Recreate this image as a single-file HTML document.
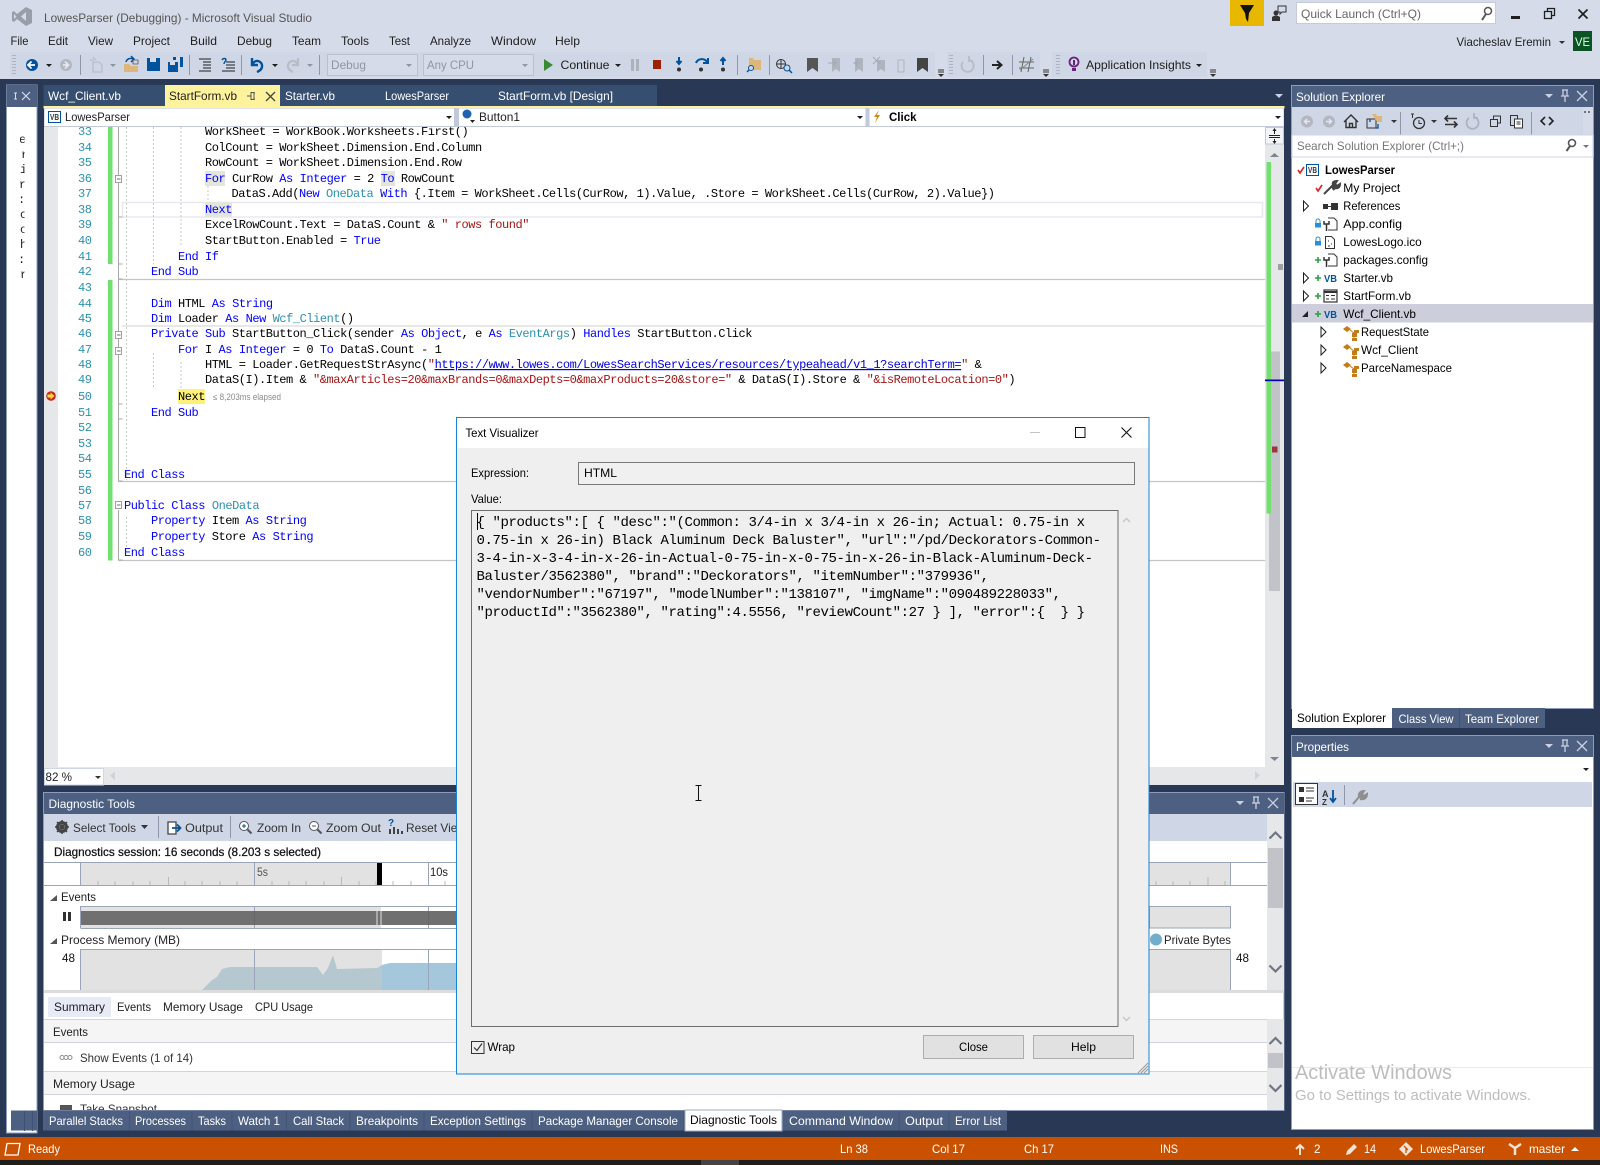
<!DOCTYPE html>
<html lang="en"><head><meta charset="utf-8"><title>LowesParser (Debugging) - Microsoft Visual Studio</title>
<style>
html,body{margin:0;padding:0;background:#293955;width:1600px;height:1165px;overflow:hidden}
svg{display:block}
text{font-family:"Liberation Sans",sans-serif;font-size:12px;fill:#1e1e1e;white-space:pre}
.w text,text.w{fill:#fff}
.c text{font-family:"Liberation Mono",monospace;font-size:12px;letter-spacing:-.45px;fill:#000}
.n text{font-family:"Liberation Mono",monospace;font-size:12px;letter-spacing:-.45px;fill:#2b91af}
.k{fill:#0000ff!important}.t{fill:#2b91af!important}.r{fill:#a31515!important}.u{fill:#0000e0!important;text-decoration:underline}
.d text{font-family:"Liberation Mono",monospace;font-size:14px;letter-spacing:-.4px;fill:#000}
.g{fill:none;stroke:#c8c8c8;stroke-width:1;stroke-dasharray:2 2}
</style></head><body>
<svg xmlns="http://www.w3.org/2000/svg" width="1600" height="1165" viewBox="0 0 1600 1165">
<defs>
<clipPath id="cl"><rect x="20" y="130" width="4.5" height="160"/></clipPath>
<clipPath id="tk"><rect x="44" y="1096" width="300" height="14"/></clipPath>
<g id="hd"><path d="M-4-2h8l-4 4z" fill="#c9d1e3"/><path d="M13-6h6M14-6v6h4v-6M12 0h8M16 0v6M28-5l10 10M38-5l-10 10" fill="none" stroke="#c9d1e3" stroke-width="1.3"/></g>
<path id="exp" d="M0-5l5 5-5 5z" fill="#fff" stroke="#1e1e1e"/>
<g id="cls" fill="#c27d1a"><path d="M0-7l4 3-4 3-4-3zM5 0h5v4h-5zM7-3h5v3h-5zM5 5h5v3h-5z"/><path d="M3-3l4 3v5" fill="none" stroke="#c27d1a"/></g>
<path id="up" d="M-6 3l6-6 6 6" fill="none" stroke="#707584" stroke-width="2.2"/>
<path id="dn" d="M-6-3l6 6 6-6" fill="none" stroke="#707584" stroke-width="2.2"/>
<path id="plus" d="M-3 0h6M0-3v6" stroke="#2ea043" stroke-width="1.6"/>
<g id="lock"><path d="M-2-1v-2a2 2 0 0 1 4 0v2" fill="none" stroke="#2a8fd8"/><rect x="-3" y="-1" width="6" height="4.5" fill="#2a8fd8"/></g>
<path id="chk" d="M-3 0l2 3 4-6" fill="none" stroke="#e01f1f" stroke-width="1.6"/>
</defs>

<!-- top chrome -->
<rect width="1600" height="1165" fill="#d6dbe9"/>
<rect x="10" y="52" width="925" height="25" fill="#cfd6e5"/>
<rect x="947" y="52" width="93" height="25" fill="#cfd6e5"/>
<rect x="1052" y="52" width="155" height="25" fill="#cfd6e5"/>
<path d="M26 7l6 3v13l-6 3-9-7-3 3-2-1v-9l2-1 3 3zM26 12l-5 4.500 5 4.500zM14 14v5l2.500-2.500z" fill="#9a9ea9" fill-rule="evenodd"/>
<text x="44" y="22" textLength="268" lengthAdjust="spacingAndGlyphs" style="fill:#555">LowesParser (Debugging) - Microsoft Visual Studio</text>
<text x="10.500" y="45" textLength="18" lengthAdjust="spacingAndGlyphs">File</text>
<text x="48" y="45" textLength="20" lengthAdjust="spacingAndGlyphs">Edit</text>
<text x="88" y="45" textLength="25" lengthAdjust="spacingAndGlyphs">View</text>
<text x="133" y="45" textLength="37" lengthAdjust="spacingAndGlyphs">Project</text>
<text x="190" y="45" textLength="27" lengthAdjust="spacingAndGlyphs">Build</text>
<text x="237" y="45" textLength="35" lengthAdjust="spacingAndGlyphs">Debug</text>
<text x="292" y="45" textLength="29" lengthAdjust="spacingAndGlyphs">Team</text>
<text x="341" y="45" textLength="28" lengthAdjust="spacingAndGlyphs">Tools</text>
<text x="389" y="45" textLength="21" lengthAdjust="spacingAndGlyphs">Test</text>
<text x="430" y="45" textLength="41" lengthAdjust="spacingAndGlyphs">Analyze</text>
<text x="491" y="45" textLength="45" lengthAdjust="spacingAndGlyphs">Window</text>
<text x="555" y="45" textLength="25" lengthAdjust="spacingAndGlyphs">Help</text>

<!-- toolbar -->
<path d="M13 55v20M15 55v20" stroke="#8a90a0" stroke-dasharray="1 2"/>
<circle cx="32" cy="65" r="6" fill="#00539c"/><path d="M35 65h-6M31.500 61.500l-3.500 3.500 3.500 3.500" fill="none" stroke="#fff" stroke-width="1.800"/>
<path d="M46 64h6l-3 3z" fill="#1e1e1e"/>
<circle cx="66" cy="65" r="6" fill="#b3b7c2"/><path d="M63 65h6M65 61.500l3.500 3.500-3.500 3.500" fill="none" stroke="#e4e7ef" stroke-width="1.800"/>
<path d="M80.500 55v20M189.500 55v20M241.500 55v20M319.500 55v20M737.500 55v20M769.500 55v20M983.500 55v20M1012.500 55v20" stroke="#8f97a8"/>
<path d="M93 62h6l3 3v7h-9zM93 57l3 3M90 60h4" fill="none" stroke="#b8bcc7" stroke-width="1.200"/>
<path d="M110 64h6l-3 3z" fill="#8f94a0"/>
<path d="M124 64h5l2 2h7v6h-14z" fill="#dcb67a"/><path d="M126 62c1-4 5-4 7-3M131 56l3 3-3 3" fill="none" stroke="#00539c" stroke-width="1.500"/><path d="M133 60h5v4h-5z" fill="none" stroke="#555" stroke-width=".8"/>
<path d="M147 58h13v13h-13z" fill="#00539c"/><rect x="150" y="58" width="6" height="4" fill="#d6dbe9"/>
<path d="M168 62h10v10h-10z" fill="#00539c"/><path d="M173 57h10v10h-3v-7h-7z" fill="#00539c"/><rect x="176" y="57" width="4" height="3" fill="#d6dbe9"/><rect x="170" y="62" width="5" height="3" fill="#d6dbe9"/>
<path d="M199 59h12M203 62h8M203 65h8M203 68h8M199 71h12" stroke="#1e1e1e"/><path d="M226 62h9M226 65h9M226 68h9M222 71h13" stroke="#1e1e1e"/><path d="M222 60c1-2 4-2 4 0 0 1-2 2-2 4" fill="none" stroke="#00539c" stroke-width="1.400"/>
<path d="M252 58v7h6M252 65c3-7 11-4 10 2-.5 3-3 4-5 5" fill="none" stroke="#00539c" stroke-width="2.400"/>
<path d="M272 64h6l-3 3z" fill="#1e1e1e"/>
<path d="M298 58v7h-6M298 65c-3-7-11-4-10 2 .5 3 3 4 5 5" fill="none" stroke="#b8bcc7" stroke-width="2.200"/>
<path d="M307 64h6l-3 3z" fill="#8f94a0"/>
<rect x="327.500" y="54.500" width="90" height="21" fill="#d6dbe9" stroke="#b9c0d0"/>
<rect x="423.500" y="54.500" width="110" height="21" fill="#d6dbe9" stroke="#b9c0d0"/>
<text x="331" y="69" textLength="35" lengthAdjust="spacingAndGlyphs" style="fill:#9095a3">Debug</text>
<text x="427" y="69" textLength="47" lengthAdjust="spacingAndGlyphs" style="fill:#9095a3">Any CPU</text>
<path d="M406 64h6l-3 3zM522 64h6l-3 3z" fill="#9095a3"/>
<path d="M544 59l9 6-9 6z" fill="#388a34"/>
<text x="560.500" y="69" textLength="49" lengthAdjust="spacingAndGlyphs">Continue</text>
<path d="M615 64h6l-3 3z" fill="#1e1e1e"/>
<path d="M631 59h3v12h-3zM636 59h3v12h-3z" fill="#aeb2bd"/>
<rect x="653" y="60" width="8" height="9" fill="#9d2000"/>
<path d="M679 57v6M676.500 61l2.500 3 2.500-3" fill="none" stroke="#00539c" stroke-width="2"/><circle cx="679" cy="69.500" r="2" fill="#333"/>
<path d="M696 63c2-5 9-5 11-1M708 58v5h-5" fill="none" stroke="#00539c" stroke-width="2"/><circle cx="701" cy="69.500" r="2" fill="#333"/>
<path d="M723 65v-6M720.500 61l2.500-3 2.500 3" fill="none" stroke="#00539c" stroke-width="2"/><circle cx="723" cy="69.500" r="2" fill="#333"/>
<path d="M749 58h4l1 2h7v10h-12z" fill="#dcb67a"/><circle cx="751" cy="68" r="2.500" fill="#cfd6e5" stroke="#00539c"/><path d="M749 70l-2 2" stroke="#00539c" stroke-width="1.500"/>
<circle cx="781" cy="64" r="4.500" fill="none" stroke="#333"/><path d="M776.500 64h9M781 59.500v9" stroke="#333"/><circle cx="787" cy="68" r="3" fill="#cfd6e5" stroke="#00539c"/><path d="M789 70l3 3" stroke="#00539c" stroke-width="1.500"/>
<path d="M807 58h11v14l-5.500-4-5.500 4z" fill="#555"/>
<path d="M832 58h8v14l-4-3-4 3z" fill="#b0b4bf"/><path d="M828 63h7M833 60l3 3-3 3" fill="none" stroke="#a5a9b5"/>
<path d="M855 58h8v14l-4-3-4 3z" fill="#b0b4bf"/><path d="M853 63h7M858 60l-3 3 3 3" fill="none" stroke="#a5a9b5"/>
<path d="M877 60h8v12l-4-3-4 3z" fill="#b0b4bf"/><path d="M873 57l7 7M880 57l-7 7" stroke="#a5a9b5"/>
<rect x="898" y="60" width="6" height="12" fill="none" stroke="#b0b4bf"/>
<path d="M917 58h11v14l-5.500-4-5.500 4z" fill="#444"/>
<path d="M938 70h6M938 72h6" stroke="#333"/><path d="M938 74h6l-3 3z" fill="#333"/>
<path d="M950 55v20M952 55v20" stroke="#8a90a0" stroke-dasharray="1 2"/>
<path d="M963 62a6 6 0 1 0 6-2M969 56v5h4" fill="none" stroke="#b8bcc7" stroke-width="1.800"/>
<path d="M992 65h9M997 61l4.500 4-4.500 4" fill="none" stroke="#222" stroke-width="2"/>
<path d="M1024 57l-3 15M1031 57l-3 15M1019 62h15M1019 68h15" stroke="#666"/><path d="M1020 70l13-11" stroke="#888"/>
<path d="M1043 70h6M1043 72h6" stroke="#333"/><path d="M1043 74h6l-3 3z" fill="#333"/>
<path d="M1057 55v20M1059 55v20" stroke="#8a90a0" stroke-dasharray="1 2"/>
<circle cx="1074" cy="62" r="4.500" fill="none" stroke="#68217a" stroke-width="1.800"/><path d="M1072 68h4v3h-4z" fill="#68217a"/><rect x="1073" y="60" width="2" height="5" fill="#68217a"/>
<text x="1086" y="69" textLength="105" lengthAdjust="spacingAndGlyphs">Application Insights</text>
<path d="M1196 64h6l-3 3z" fill="#1e1e1e"/>
<path d="M1210 70h6M1210 72h6" stroke="#333"/><path d="M1210 74h6l-3 3z" fill="#333"/>

<!-- top right -->
<rect x="1230" width="34" height="26" fill="#e8b800"/><path d="M1240 5h14l-5 8-1 9-2-3-1-6z" fill="#111"/>
<circle cx="1276" cy="13" r="2.500" fill="#333"/><path d="M1272 21v-4q4-3 8 0v4z" fill="#333"/><path d="M1278 6h8v6h-4l-2 2v-2h-2z" fill="none" stroke="#333"/>
<rect x="1296.500" y="2.500" width="199" height="21" fill="#fff" stroke="#c6cbd9"/>
<text x="1301" y="18" textLength="120" lengthAdjust="spacingAndGlyphs" style="fill:#666">Quick Launch (Ctrl+Q)</text>
<circle cx="1488" cy="11" r="3.500" fill="none" stroke="#555" stroke-width="1.500"/><path d="M1486 14l-4 6" stroke="#555" stroke-width="2"/>
<rect x="1511" y="16" width="9" height="3" fill="#1e1e1e"/>
<path d="M1544.500 11.500h7v7h-7zM1547.500 11v-2.500h7v7h-3" fill="none" stroke="#1e1e1e" stroke-width="1.300"/>
<path d="M1578.500 9.500l9 9M1587.500 9.500l-9 9" stroke="#1e1e1e" stroke-width="1.700"/>
<text x="1456.500" y="46" textLength="94.500" lengthAdjust="spacingAndGlyphs">Viacheslav Eremin</text>
<path d="M1559 41h6l-3 3z" fill="#333"/>
<rect x="1573" y="31" width="19" height="20" fill="#0a5423"/><text x="1575" y="46" textLength="15" lengthAdjust="spacingAndGlyphs" class="w" style="fill:#dfe">VE</text>

<!-- dark shell -->
<rect y="79" width="1600" height="1058" fill="#293955"/>

<!-- left collapsed panel -->
<rect x="6.500" y="85" width="30.500" height="1048" fill="#fff" stroke="#8e9bbc"/>
<rect x="6.500" y="85" width="30.500" height="22" fill="#4d6082"/>
<path d="M14 93h3M15.500 93v6M14 99h3" stroke="#d7dcea"/><path d="M22 92l8 8M30 92l-8 8" stroke="#d7dcea" stroke-width="1.200"/>
<g clip-path="url(#cl)" style="font-family:'Liberation Mono'"><text x="19" y="143" style="font-family:'Liberation Mono';font-size:12px">e</text><text x="21" y="158" style="font-family:'Liberation Mono';font-size:12px">r</text><text x="20" y="173" style="font-family:'Liberation Mono';font-size:12px">ic</text><text x="19" y="188" style="font-family:'Liberation Mono';font-size:12px">r</text><text x="18" y="203" style="font-family:'Liberation Mono';font-size:12px">:c</text><text x="20" y="218" style="font-family:'Liberation Mono';font-size:12px">c</text><text x="20" y="233" style="font-family:'Liberation Mono';font-size:12px">o</text><text x="20" y="248" style="font-family:'Liberation Mono';font-size:12px">h</text><text x="18" y="263" style="font-family:'Liberation Mono';font-size:12px">:c</text><text x="20" y="278" style="font-family:'Liberation Mono';font-size:12px">r</text></g>

<!-- tabs -->
<rect x="43.500" y="85" width="613.500" height="21" fill="#364e6f"/>
<rect x="165" y="85" width="115" height="21" fill="#fff29d"/>
<g class="w">
<text x="48" y="100" textLength="73" lengthAdjust="spacingAndGlyphs">Wcf_Client.vb</text>
<text x="285" y="100" textLength="50" lengthAdjust="spacingAndGlyphs">Starter.vb</text>
<text x="385" y="100" textLength="64" lengthAdjust="spacingAndGlyphs">LowesParser</text>
<text x="498" y="100" textLength="115" lengthAdjust="spacingAndGlyphs">StartForm.vb [Design]</text>
</g>
<text x="169" y="100" textLength="68" lengthAdjust="spacingAndGlyphs">StartForm.vb</text>
<path d="M247 96h4M251 92.500h3v7h-3zM254 93h1M254 99h1" fill="none" stroke="#555"/><path d="M266 92l9 9M275 92l-9 9" stroke="#444" stroke-width="1.300"/>
<path d="M1275 94h8l-4 4z" fill="#c9d1e3"/>
<rect x="43.500" y="106" width="1241" height="2.500" fill="#fff29d"/>

<!-- editor -->
<rect x="44" y="108" width="1240" height="677" fill="#fff"/>
<rect x="44" y="127" width="14" height="640" fill="#e6e7e8"/>
<rect x="1265" y="127" width="19" height="640" fill="#e6e7e8"/>
<rect x="44" y="767" width="1240" height="18" fill="#e6e7e8"/>
<!-- current-line, separators -->
<rect x="122.500" y="202.500" width="1140" height="14.500" fill="#fff" stroke="#e8e8f0" stroke-width="1.500"/>
<path d="M118 279.500h1147M118 481.500h1147M118 560.500h1147" stroke="#c4c4c4" stroke-width="1.200"/>
<path d="M122 326h1143" stroke="#e0e0e0" stroke-width="1.500"/>
<!-- change bars -->
<path d="M108 127h4.500v137H108zM108 280h4.500v280.500H108z" fill="#72e06f"/>
<!-- gutter -->
<path d="M118.500 127v354M118.500 510v50M118.500 217h4M118.500 264h4M118.500 279h4M118.500 404h4M118.500 419h4M118.500 481h4M118.500 560h4" stroke="#a8a8a8" fill="none"/>
<path class="g" d="M126.500 127v353M126.500 517v32M153.500 127v137M153.500 353v36M181 127v120M181 362v27M208 186v16"/>
<g fill="#fff" stroke="#a0a0a0"><rect x="115.500" y="175.500" width="6" height="7"/><rect x="115.500" y="331.500" width="6" height="7"/><rect x="115.500" y="347.500" width="6" height="7"/><rect x="115.500" y="501.500" width="6" height="7"/></g>
<path d="M117 179h3.500M117 335h3.500M117 351h3.500M117 505h3.500" stroke="#707070"/>
<!-- highlight -->
<rect x="205" y="171" width="20" height="15" fill="#e4e5dc"/>
<rect x="381" y="171" width="14" height="15" fill="#e4e5dc"/>
<rect x="205" y="202" width="27" height="15" fill="#e4e5dc"/>
<rect x="178" y="389" width="27" height="15" fill="#fff07a"/>
<!-- numbers -->
<g class="n" transform="translate(0,-1)">
<text x="78" y="136">33</text><text x="78" y="152">34</text><text x="78" y="167">35</text><text x="78" y="183">36</text><text x="78" y="198">37</text><text x="78" y="214">38</text><text x="78" y="229">39</text><text x="78" y="245">40</text><text x="78" y="261">41</text><text x="78" y="276">42</text><text x="78" y="292">43</text><text x="78" y="308">44</text><text x="78" y="323">45</text><text x="78" y="338">46</text><text x="78" y="354">47</text><text x="78" y="369">48</text><text x="78" y="384">49</text><text x="78" y="401">50</text><text x="78" y="417">51</text><text x="78" y="432">52</text><text x="78" y="448">53</text><text x="78" y="463">54</text><text x="78" y="479">55</text><text x="78" y="495">56</text><text x="78" y="510">57</text><text x="78" y="525">58</text><text x="78" y="541">59</text><text x="78" y="557">60</text>
</g>
<!-- code -->
<g class="c" transform="translate(0,-1)">
<text x="205" y="136">WorkSheet = WorkBook.Worksheets.First()</text>
<text x="205" y="152">ColCount = WorkSheet.Dimension.End.Column</text>
<text x="205" y="167">RowCount = WorkSheet.Dimension.End.Row</text>
<text x="205" y="183"><tspan class="k">For</tspan> CurRow <tspan class="k">As</tspan> <tspan class="k">Integer</tspan> = 2 <tspan class="k">To</tspan> RowCount</text>
<text x="231.500" y="198">DataS.Add(<tspan class="k">New</tspan> <tspan class="t">OneData</tspan> <tspan class="k">With</tspan> {.Item = WorkSheet.Cells(CurRow, 1).Value, .Store = WorkSheet.Cells(CurRow, 2).Value})</text>
<text x="205" y="214" class="k" style="fill:#0000ff">Next</text>
<text x="205" y="229">ExcelRowCount.Text = DataS.Count &amp; <tspan class="r">" rows found"</tspan></text>
<text x="205" y="245">StartButton.Enabled = <tspan class="k">True</tspan></text>
<text x="178" y="261"><tspan class="k">End</tspan> <tspan class="k">If</tspan></text>
<text x="151" y="276"><tspan class="k">End</tspan> <tspan class="k">Sub</tspan></text>
<text x="151" y="308"><tspan class="k">Dim</tspan> HTML <tspan class="k">As</tspan> <tspan class="k">String</tspan></text>
<text x="151" y="323"><tspan class="k">Dim</tspan> Loader <tspan class="k">As</tspan> <tspan class="k">New</tspan> <tspan class="t">Wcf_Client</tspan>()</text>
<text x="151" y="338"><tspan class="k">Private</tspan> <tspan class="k">Sub</tspan> StartButton_Click(sender <tspan class="k">As</tspan> <tspan class="k">Object</tspan>, e <tspan class="k">As</tspan> <tspan class="t">EventArgs</tspan>) <tspan class="k">Handles</tspan> StartButton.Click</text>
<text x="178" y="354"><tspan class="k">For</tspan> I <tspan class="k">As</tspan> <tspan class="k">Integer</tspan> = 0 <tspan class="k">To</tspan> DataS.Count - 1</text>
<text x="205" y="369">HTML = Loader.GetRequestStrAsync(<tspan class="r">"</tspan><tspan class="u">https://www.lowes.com/LowesSearchServices/resources/typeahead/v1_1?searchTerm=</tspan><tspan class="r">"</tspan> &amp;</text>
<text x="205" y="384">DataS(I).Item &amp; <tspan class="r">"&amp;maxArticles=20&amp;maxBrands=0&amp;maxDepts=0&amp;maxProducts=20&amp;store="</tspan> &amp; DataS(I).Store &amp; <tspan class="r">"&amp;isRemoteLocation=0"</tspan>)</text>
<text x="178" y="401">Next</text>
<text x="151" y="417"><tspan class="k">End</tspan> <tspan class="k">Sub</tspan></text>
<text x="124" y="479"><tspan class="k">End</tspan> <tspan class="k">Class</tspan></text>
<text x="124" y="510"><tspan class="k">Public</tspan> <tspan class="k">Class</tspan> <tspan class="t">OneData</tspan></text>
<text x="151" y="525"><tspan class="k">Property</tspan> Item <tspan class="k">As</tspan> <tspan class="k">String</tspan></text>
<text x="151" y="541"><tspan class="k">Property</tspan> Store <tspan class="k">As</tspan> <tspan class="k">String</tspan></text>
<text x="124" y="557"><tspan class="k">End</tspan> <tspan class="k">Class</tspan></text>
</g>
<text x="213" y="400" textLength="68" lengthAdjust="spacingAndGlyphs" style="font-size:9px;fill:#8a8a8a">≤ 8,203ms elapsed</text>
<circle cx="51" cy="396" r="4.800" fill="#c5281c"/><path d="M47.500 394.500h3v-2l4 3.500-4 3.500v-2h-3z" fill="#ffd83b"/>
<!-- editor combos -->
<rect x="44" y="108" width="1240" height="19" fill="#c2c9da"/>
<rect x="44.500" y="108.500" width="409.500" height="17.500" fill="#fff"/>
<rect x="459" y="108.500" width="406.500" height="17.500" fill="#fff"/>
<rect x="869.500" y="108.500" width="414" height="17.500" fill="#fff"/>
<rect x="48.500" y="111.500" width="12" height="11" fill="#fff" stroke="#00539c"/><text x="50" y="120" textLength="9" lengthAdjust="spacingAndGlyphs" style="font-size:8px;fill:#333;font-weight:bold">VB</text>
<text x="65" y="121" textLength="65" lengthAdjust="spacingAndGlyphs">LowesParser</text>
<path d="M446 116h6l-3 3zM857 116h6l-3 3zM1275 116h6l-3 3z" fill="#1e1e1e"/>
<circle cx="467" cy="114" r="4.500" fill="#1f63b0"/><path d="M470 120h5l-2.500 3z" fill="#222"/>
<text x="479" y="121" textLength="41" lengthAdjust="spacingAndGlyphs">Button1</text>
<path d="M879 110l-5 7h3l-2 6 5-8h-3z" fill="#d08a1c"/>
<text x="889" y="121" textLength="27.500" lengthAdjust="spacingAndGlyphs" style="font-weight:bold;fill:#000">Click</text>
<!-- editor scrollbar -->
<rect x="1265.500" y="127.500" width="18" height="16.500" fill="#f2f4f9" stroke="#c0c7d8"/>
<path d="M1269 135.500h11M1269 137.500h11" stroke="#222"/><path d="M1274.500 128l-2 3h4zM1274.500 144l-2-3h4z" fill="#222"/><path d="M1274.500 130v4M1274.500 139v4" stroke="#222"/>
<path d="M1270 157l4.500-4 4.500 4z" fill="#7f8493"/>
<rect x="1269" y="351.500" width="11" height="239.500" fill="#c2c3c9"/>
<rect x="1266.500" y="162" width="4.500" height="351.500" fill="#72e06f"/>
<rect x="1278" y="264" width="5" height="6" fill="#a0a0a0"/>
<rect x="1265" y="379.500" width="19" height="1.700" fill="#0000b0"/>
<rect x="1272" y="446.500" width="5.500" height="6" fill="#9e3440"/>
<path d="M1270 757l4.500 4 4.500-4z" fill="#7f8493"/>
<path d="M110 775.500l5-4v9z" fill="#d0d2da"/><path d="M1255 771l5 4.500-5 4.500z" fill="#d0d2da"/>
<rect x="44.500" y="768.500" width="59" height="16.500" fill="#fff" stroke="#cfd6e5"/>
<text x="45.500" y="781" textLength="26.500" lengthAdjust="spacingAndGlyphs">82 %</text>
<path d="M95 776h6l-3 3z" fill="#333"/>

<!-- diagnostic tools -->
<rect x="43.500" y="792.500" width="1240.500" height="318" fill="#fff" stroke="#8e9bbc"/>
<rect x="44" y="793" width="1240" height="21" fill="#4d6082"/>
<text x="48.500" y="808" textLength="86.500" lengthAdjust="spacingAndGlyphs" class="w" style="fill:#fff">Diagnostic Tools</text>
<use href="#hd" x="1240" y="803"/>
<rect x="44" y="814" width="1223" height="27" fill="#cfd6e5"/>
<path d="M158.500 816v22M230.500 816v22" stroke="#8f97a8"/>
<circle cx="62" cy="827" r="4.500" fill="none" stroke="#444" stroke-width="3"/><path d="M62 820v14M55 827h14M57 822l10 10M67 822l-10 10" stroke="#444" stroke-width="1.500"/>
<text x="73" y="832" textLength="63" lengthAdjust="spacingAndGlyphs" style="fill:#333">Select Tools</text>
<path d="M141 825h7l-3.500 4z" fill="#333"/>
<path d="M168 822h8v12h-8z" fill="#fff" stroke="#444" stroke-width="1.300"/><path d="M172 828h8M177 824.500l3.500 3.500-3.500 3.500" fill="none" stroke="#00539c" stroke-width="1.800"/>
<text x="185" y="832" textLength="38" lengthAdjust="spacingAndGlyphs" style="fill:#333">Output</text>
<circle cx="244" cy="826" r="4.500" fill="#fff" stroke="#555"/><path d="M247.500 829.500l4 4" stroke="#555" stroke-width="2"/><path d="M242 826h4M244 824v4" stroke="#00539c"/>
<text x="257" y="832" textLength="44" lengthAdjust="spacingAndGlyphs" style="fill:#333">Zoom In</text>
<circle cx="314" cy="826" r="4.500" fill="#fff" stroke="#555"/><path d="M317.500 829.500l4 4" stroke="#555" stroke-width="2"/><path d="M312 826h4" stroke="#555"/>
<text x="326" y="832" textLength="55" lengthAdjust="spacingAndGlyphs" style="fill:#333">Zoom Out</text>
<path d="M390 834v-5M394 834v-7M398 834v-5M402 834v-3" stroke="#444" stroke-width="2"/><text x="388" y="826" style="font-size:10px;font-weight:bold;fill:#00539c">?</text>
<text x="406" y="832" textLength="60" lengthAdjust="spacingAndGlyphs" style="fill:#333">Reset View</text>
<text x="54" y="856" textLength="267" lengthAdjust="spacingAndGlyphs" style="fill:#111;stroke:#111;stroke-width:.25">Diagnostics session: 16 seconds (8.203 s selected)</text>
<!-- ruler -->
<rect x="80.500" y="862" width="296.500" height="23" fill="#e2e2e2"/>
<rect x="377" y="863" width="5" height="22" fill="#000"/>
<rect x="1149" y="862" width="81" height="23" fill="#e2e2e2"/>
<path d="M44 862.500h1223M44 885.500h1223" stroke="#9aa5b8"/>
<path d="M80.500 862v23M254.500 862v23M428.500 862v23M1230.500 862v23" stroke="#9aa5b8"/>
<path d="M98 881v4M115 881v4M133 881v4M150 881v4M185 881v4M202 881v4M220 881v4M237 881v4M272 881v4M289 881v4M306 881v4M324 881v4M359 881v4M376 881v4M393 881v4M411 881v4M445 881v4M1156 881v4M1173 881v4M1190 881v4M1225 881v4" stroke="#b5b8bf"/>
<path d="M168.500 877v8M341.500 877v8M1208 877v8" stroke="#b5b8bf"/>
<text x="257" y="876" textLength="11" lengthAdjust="spacingAndGlyphs" style="fill:#555">5s</text>
<text x="430" y="876" textLength="18" lengthAdjust="spacingAndGlyphs" style="fill:#222">10s</text>
<!-- events -->
<path d="M50 901l7-6v6z" fill="#555"/>
<text x="61" y="901" textLength="35" lengthAdjust="spacingAndGlyphs">Events</text>
<path d="M63 912h3v9h-3zM68 912h3v9h-3z" fill="#333"/>
<rect x="81" y="907" width="300" height="21" fill="#e2e2e2"/>
<path d="M80.500 906.500h380M80.500 928.500h380M80.500 906v22M254.500 906v22M428.500 906v22" stroke="#9aa5b8" fill="none"/>
<rect x="81" y="911" width="380" height="14" fill="#707070"/>
<path d="M254.500 911v14M428.500 911v14" stroke="#666"/>
<path d="M377 911v14M381 911v14" stroke="#e2e2e2"/>
<rect x="1149.500" y="906.500" width="81" height="21.500" fill="#e2e2e2" stroke="#9aa5b8"/>
<!-- memory -->
<path d="M50 944l7-6v6z" fill="#555"/>
<text x="61" y="944" textLength="119" lengthAdjust="spacingAndGlyphs" style="fill:#222">Process Memory (MB)</text>
<text x="62" y="962" textLength="13" lengthAdjust="spacingAndGlyphs" style="fill:#111">48</text>
<rect x="80.500" y="949.500" width="301.500" height="41" fill="#e2e2e2"/>
<rect x="382" y="949.500" width="80" height="41" fill="#fff"/>
<path d="M202 990l10-10 5-3 5-8 8-2 87 0 6 8 5-7 5-13 4 14 40-1 5-3v27z" fill="#b5c8d0"/>
<path d="M382 990v-25l8-2 72 0v27z" fill="#a5c7dc"/>
<path d="M80.500 949.500h380M80.500 949v41M254.500 949v41M428.500 949v41" stroke="#9aa5b8" fill="none"/>
<rect x="1149" y="949.500" width="81" height="41" fill="#e2e2e2"/><path d="M1149 949.500h81.500v41" fill="none" stroke="#9aa5b8"/>
<circle cx="1156" cy="939.500" r="6" fill="#72aecb"/>
<text x="1164" y="944" textLength="67" lengthAdjust="spacingAndGlyphs" style="fill:#222">Private Bytes</text>
<text x="1236" y="962" textLength="13" lengthAdjust="spacingAndGlyphs" style="fill:#111">48</text>
<rect x="44" y="990" width="1240" height="3" fill="#dcdcdc"/>
<!-- scrollbars -->
<rect x="1267" y="814" width="17" height="176" fill="#e6e7e8"/>
<rect x="1268" y="848" width="15" height="60" fill="#c2c3c9"/>
<use href="#up" x="1275.500" y="835.500"/><use href="#dn" x="1275.500" y="968.500"/>
<!-- summary -->
<rect x="48" y="997" width="63" height="20" fill="#e6ebf5"/>
<text x="54" y="1011" textLength="51" lengthAdjust="spacingAndGlyphs" style="fill:#222">Summary</text>
<text x="117" y="1011" textLength="34" lengthAdjust="spacingAndGlyphs" style="fill:#222">Events</text>
<text x="163" y="1011" textLength="80" lengthAdjust="spacingAndGlyphs" style="fill:#222">Memory Usage</text>
<text x="255" y="1011" textLength="58" lengthAdjust="spacingAndGlyphs" style="fill:#222">CPU Usage</text>
<rect x="44" y="1019" width="1223" height="23" fill="#f5f5f5"/>
<rect x="44" y="1071.500" width="1223" height="23" fill="#f5f5f5"/>
<path d="M44 1019.500h1223M44 1042.500h1223M44 1071.500h1223M44 1094.500h1223" stroke="#d2d3de"/>
<text x="53" y="1036" textLength="35" lengthAdjust="spacingAndGlyphs" style="fill:#222">Events</text>
<g fill="none" stroke="#8b8b8b"><circle cx="62" cy="1057.500" r="2"/><circle cx="66" cy="1057.500" r="2"/><circle cx="70" cy="1057.500" r="2"/></g>
<text x="80" y="1062" textLength="113" lengthAdjust="spacingAndGlyphs" style="fill:#333">Show Events (1 of 14)</text>
<text x="53" y="1088" textLength="82" lengthAdjust="spacingAndGlyphs" style="fill:#222">Memory Usage</text>
<g clip-path="url(#tk)"><rect x="60" y="1105" width="12" height="9" fill="#555"/><text x="80" y="1113" textLength="77" lengthAdjust="spacingAndGlyphs" style="fill:#333">Take Snapshot</text></g>
<rect x="1267" y="1019" width="17" height="91" fill="#e6e7e8"/>
<rect x="1268" y="1053" width="15" height="15" fill="#c2c3c9"/>
<use href="#up" x="1275.500" y="1041"/><use href="#dn" x="1275.500" y="1088"/>

<!-- bottom tabs -->
<rect x="11" y="1110.500" width="26" height="20" fill="#4d6082"/>
<path d="M24.500 1111v20M32.500 1111v20" stroke="#3f5273"/>
<rect x="43" y="1110.500" width="964" height="20" fill="#4d6082"/>
<path d="M129.500 1111v19M192 1111v19M232 1111v19M286.500 1111v19M350 1111v19M424 1111v19M532 1111v19M684 1111v19M899 1111v19M949 1111v19" stroke="#415473"/>
<rect x="685" y="1110" width="97" height="21" fill="#fff" stroke="#9fabc4"/>
<g class="w">
<text x="49" y="1125" textLength="74" lengthAdjust="spacingAndGlyphs">Parallel Stacks</text>
<text x="135" y="1125" textLength="51" lengthAdjust="spacingAndGlyphs">Processes</text>
<text x="198" y="1125" textLength="28" lengthAdjust="spacingAndGlyphs">Tasks</text>
<text x="238" y="1125" textLength="42" lengthAdjust="spacingAndGlyphs">Watch 1</text>
<text x="293" y="1125" textLength="51" lengthAdjust="spacingAndGlyphs">Call Stack</text>
<text x="356" y="1125" textLength="62" lengthAdjust="spacingAndGlyphs">Breakpoints</text>
<text x="430" y="1125" textLength="96" lengthAdjust="spacingAndGlyphs">Exception Settings</text>
<text x="538" y="1125" textLength="140" lengthAdjust="spacingAndGlyphs">Package Manager Console</text>
<text x="789" y="1125" textLength="104" lengthAdjust="spacingAndGlyphs">Command Window</text>
<text x="905" y="1125" textLength="38" lengthAdjust="spacingAndGlyphs">Output</text>
<text x="955" y="1125" textLength="46" lengthAdjust="spacingAndGlyphs">Error List</text>
</g>
<text x="690" y="1124" textLength="87" lengthAdjust="spacingAndGlyphs" style="fill:#000">Diagnostic Tools</text>

<!-- solution explorer -->
<rect x="1291.500" y="85.500" width="302" height="623" fill="#fff" stroke="#8e9bbc"/>
<rect x="1292" y="86" width="301" height="21" fill="#4d6082"/>
<text x="1296" y="101" textLength="89" lengthAdjust="spacingAndGlyphs" class="w" style="fill:#fff">Solution Explorer</text>
<use href="#hd" x="1549" y="96"/>
<rect x="1292" y="107" width="301" height="28" fill="#cfd6e5"/>
<rect x="1583" y="107" width="10" height="28" fill="#d6dbe9"/>
<path d="M1585 111v2M1589 111v2" stroke="#555" stroke-width="1.500"/>
<circle cx="1307" cy="121.500" r="6" fill="#b3b7c2"/><path d="M1310 121.500h-5M1307 119l-2.500 2.500 2.500 2.500" fill="none" stroke="#e4e7ef" stroke-width="1.500"/>
<circle cx="1329" cy="121.500" r="6" fill="#b3b7c2"/><path d="M1326 121.500h5M1329 119l2.500 2.500-2.500 2.500" fill="none" stroke="#e4e7ef" stroke-width="1.500"/>
<path d="M1344 122l7-7 7 7M1346 120v7.500h10V120M1349.500 127.500v-4h3v4" fill="none" stroke="#333" stroke-width="1.400"/>
<path d="M1367 119h9v9h-9z" fill="none" stroke="#333"/><path d="M1372 114h4l1 2h5v6h-5z" fill="#dcb67a"/><path d="M1378 124v4h-3M1370 122v-3" fill="none" stroke="#00539c" stroke-width="1.300"/>
<path d="M1391 120h6l-3 3z" fill="#333"/>
<path d="M1400.500 112v24M1531.500 112v24" stroke="#8f97a8"/>
<circle cx="1419" cy="123" r="5.500" fill="none" stroke="#333" stroke-width="1.300"/><path d="M1419 120v3.500h3M1411 114h3M1412.500 114v4" fill="none" stroke="#333"/>
<path d="M1431 120h6l-3 3z" fill="#333"/>
<path d="M1445 118.500h12M1448 115.500l-3 3 3 3M1457 124.500h-12M1454 121.500l3 3-3 3" fill="none" stroke="#333" stroke-width="1.600"/>
<path d="M1469 118a6 6 0 1 0 5-1M1474 113v5h4" fill="none" stroke="#aeb2bd" stroke-width="1.800"/>
<path d="M1490.500 119.500h7v7h-7zM1493.500 119v-3h7v7h-3" fill="none" stroke="#333"/>
<path d="M1510.500 115.500h7v10h-7z" fill="none" stroke="#333"/><path d="M1514.500 119h8v9h-8z" fill="#fff" stroke="#333"/><path d="M1516.500 122h4M1516.500 124h4" stroke="#333"/>
<path d="M1545 117l-4 4 4 4M1549 117l4 4-4 4" fill="none" stroke="#222" stroke-width="1.600"/>
<rect x="1292" y="135" width="301" height="22" fill="#fff" stroke="#cfd6e5"/>
<text x="1297" y="150" textLength="167" lengthAdjust="spacingAndGlyphs" style="fill:#777">Search Solution Explorer (Ctrl+;)</text>
<circle cx="1572" cy="143" r="3.500" fill="none" stroke="#555" stroke-width="1.600"/><path d="M1570 146l-3.500 5" stroke="#555" stroke-width="2"/>
<path d="M1583 145h6l-3 3z" fill="#777"/>
<rect x="1292" y="304" width="301" height="18.500" fill="#ccceDB"/>
<!-- tree icons -->
<use href="#chk" x="1301" y="170"/>
<rect x="1306.500" y="164.500" width="12" height="11" fill="#fff" stroke="#00539c"/><text x="1308" y="173" textLength="9" lengthAdjust="spacingAndGlyphs" style="font-size:8px;font-weight:bold;fill:#333">VB</text>
<text x="1325" y="174" textLength="70" lengthAdjust="spacingAndGlyphs" style="font-weight:bold;fill:#000">LowesParser</text>
<use href="#chk" x="1319" y="188"/><path d="M1324 194l7-7M1331 187l2-2c-1-3 1-4 4-4l-2 3 2 2 3-2c0 3-2 5-5 4l-2 2" fill="#444" stroke="#444" stroke-width="2"/>
<text x="1343.300" y="192" textLength="57" lengthAdjust="spacingAndGlyphs" style="fill:#000">My Project</text>
<use href="#exp" x="1303.500" y="206"/><path d="M1323 204h5v5h-5zM1331 203h7v7h-7z" fill="#333"/><path d="M1328 206.500h3" stroke="#333"/>
<text x="1343.300" y="210" textLength="57" lengthAdjust="spacingAndGlyphs" style="fill:#000">References</text>
<use href="#lock" x="1318" y="224"/><path d="M1328 218h6l3 3v9h-9" fill="none" stroke="#333"/><path d="M1324 221v3h5v-3M1326.500 224v7" fill="none" stroke="#333" stroke-width="1.500"/>
<text x="1343.300" y="228" textLength="58.700" lengthAdjust="spacingAndGlyphs" style="fill:#000">App.config</text>
<use href="#lock" x="1318" y="242"/><path d="M1325.500 236.500h6l3 3v9h-9z" fill="#fff" stroke="#333"/><path d="M1328 241h1M1331 244h1M1328 246h2" stroke="#333"/>
<text x="1343.300" y="246" textLength="78.400" lengthAdjust="spacingAndGlyphs" style="fill:#000">LowesLogo.ico</text>
<use href="#plus" x="1318" y="260"/><path d="M1328 254h6l3 3v9h-9" fill="none" stroke="#333"/><path d="M1324 257v3h5v-3M1326.500 260v7" fill="none" stroke="#333" stroke-width="1.500"/>
<text x="1343.300" y="264" textLength="84.700" lengthAdjust="spacingAndGlyphs" style="fill:#000">packages.config</text>
<use href="#exp" x="1303.500" y="278"/><use href="#plus" x="1318" y="278"/>
<text x="1324" y="282" textLength="13" lengthAdjust="spacingAndGlyphs" style="font-size:10px;font-weight:bold;fill:#00539c">VB</text>
<text x="1343.300" y="282" textLength="49.700" lengthAdjust="spacingAndGlyphs" style="fill:#000">Starter.vb</text>
<use href="#exp" x="1303.500" y="296"/><use href="#plus" x="1318" y="296"/>
<rect x="1324" y="290" width="13" height="12" fill="#fff" stroke="#333" stroke-width="1.200"/><path d="M1324 292h13" stroke="#333" stroke-width="2"/><path d="M1326 295.500h3M1331 295.500h4M1326 299h3M1331 299h4" stroke="#333"/>
<text x="1343.300" y="300" textLength="67.700" lengthAdjust="spacingAndGlyphs" style="fill:#000">StartForm.vb</text>
<path d="M1308 311v6h-6z" fill="#222"/><use href="#plus" x="1318" y="314"/>
<text x="1324" y="318" textLength="13" lengthAdjust="spacingAndGlyphs" style="font-size:10px;font-weight:bold;fill:#00539c">VB</text>
<text x="1343.300" y="318" textLength="72.700" lengthAdjust="spacingAndGlyphs" style="fill:#000">Wcf_Client.vb</text>
<use href="#exp" x="1321" y="332"/><use href="#cls" x="1347" y="333"/>
<text x="1361" y="336" textLength="68" lengthAdjust="spacingAndGlyphs" style="fill:#000">RequestState</text>
<use href="#exp" x="1321" y="350"/><use href="#cls" x="1347" y="351"/>
<text x="1361" y="354" textLength="57" lengthAdjust="spacingAndGlyphs" style="fill:#000">Wcf_Client</text>
<use href="#exp" x="1321" y="368"/><use href="#cls" x="1347" y="369"/>
<text x="1361" y="372" textLength="91" lengthAdjust="spacingAndGlyphs" style="fill:#000">ParceNamespace</text>
<!-- se tabs -->
<rect x="1292" y="708" width="100" height="20" fill="#fff"/>
<rect x="1392" y="708" width="153" height="20" fill="#4d6082"/>
<path d="M1459.500 708v20" stroke="#415473"/>
<text x="1297" y="722" textLength="89" lengthAdjust="spacingAndGlyphs" style="fill:#000">Solution Explorer</text>
<g class="w"><text x="1398.500" y="723" textLength="55" lengthAdjust="spacingAndGlyphs">Class View</text>
<text x="1465" y="723" textLength="74" lengthAdjust="spacingAndGlyphs">Team Explorer</text></g>

<!-- properties -->
<rect x="1291.500" y="735.500" width="302" height="394" fill="#fff" stroke="#8e9bbc"/>
<rect x="1292" y="736" width="301" height="21" fill="#4d6082"/>
<text x="1296" y="751" textLength="53" lengthAdjust="spacingAndGlyphs" class="w" style="fill:#fff">Properties</text>
<use href="#hd" x="1549" y="746"/>
<path d="M1583 768h6l-3 3z" fill="#1e1e1e"/>
<rect x="1293" y="782" width="299" height="25" fill="#cfd6e5"/>
<rect x="1295.500" y="783.500" width="22" height="21" fill="#fff" stroke="#333"/>
<path d="M1299 787h5v5h-5zM1299 797h5v5h-5z" fill="#333"/><path d="M1306 788h8M1306 791h8M1306 798h8M1306 801h6" stroke="#333"/>
<text x="1322" y="797" style="font-size:9px;font-weight:bold;fill:#333">A</text><text x="1322" y="805" style="font-size:8px;font-weight:bold;fill:#333">Z</text>
<path d="M1333 790v12M1330 798l3 4 3-4" fill="none" stroke="#00539c" stroke-width="1.800"/>
<path d="M1344.500 785v20" stroke="#8f97a8"/>
<path d="M1353 804l6-7M1359 797c-1-4 2-6 5-6l-2 3 2 2 3-2c0 4-3 6-7 5" fill="#8f8f8f" stroke="#8f8f8f" stroke-width="2"/>
<path d="M1292 1067.500h301" stroke="#eaeaea"/>
<text x="1295" y="1079" textLength="157" lengthAdjust="spacingAndGlyphs" style="font-size:20px;fill:#bdbdbd">Activate Windows</text>
<text x="1295" y="1100" textLength="236" lengthAdjust="spacingAndGlyphs" style="font-size:14.500px;fill:#bdbdbd">Go to Settings to activate Windows.</text>

<!-- status bar -->
<rect y="1137" width="1600" height="23" fill="#ca5100"/>
<rect y="1160" width="1600" height="5" fill="#1e1f1c"/>
<rect x="701" y="1160" width="38" height="5" fill="#444"/>
<path d="M7 1143.500h13l-2 11.500H5z" fill="none" stroke="#fff" stroke-width="1.300"/>
<g class="w">
<text x="28" y="1153" textLength="32" lengthAdjust="spacingAndGlyphs">Ready</text>
<text x="840" y="1153" textLength="28" lengthAdjust="spacingAndGlyphs">Ln 38</text>
<text x="932" y="1153" textLength="33" lengthAdjust="spacingAndGlyphs">Col 17</text>
<text x="1024" y="1153" textLength="30" lengthAdjust="spacingAndGlyphs">Ch 17</text>
<text x="1160" y="1153" textLength="18" lengthAdjust="spacingAndGlyphs">INS</text>
<text x="1314" y="1153" textLength="6.500" lengthAdjust="spacingAndGlyphs">2</text>
<text x="1364" y="1153" textLength="12" lengthAdjust="spacingAndGlyphs">14</text>
<text x="1420" y="1153" textLength="65" lengthAdjust="spacingAndGlyphs">LowesParser</text>
<text x="1529" y="1153" textLength="36" lengthAdjust="spacingAndGlyphs">master</text>
</g>
<path d="M1300 1155v-10M1296 1149l4-4 4 4" fill="none" stroke="#f7e3d6" stroke-width="2"/>
<path d="M1346 1155l1-4 7-7 3 3-7 7z" fill="#f7e3d6"/>
<path d="M1406 1142l7 7-7 7-7-7z" fill="#f7e3d6"/><path d="M1404 1146l4 4M1406 1148v5" stroke="#ca5100" stroke-width="1.300"/>
<path d="M1509 1144l6 4 6-4M1515 1148v7" fill="none" stroke="#f7e3d6" stroke-width="2.500"/>
<path d="M1571 1151l4-4 4 4z" fill="#fff"/>

<!-- dialog -->
<rect x="456.500" y="417.500" width="692.500" height="656.500" fill="#efefef" stroke="#1a82d6"/>
<rect x="457" y="418" width="691.500" height="30" fill="#fff"/>
<text x="465.500" y="437" textLength="73" lengthAdjust="spacingAndGlyphs" style="fill:#000">Text Visualizer</text>
<path d="M1030 432.500h10" stroke="#c4c4c4"/>
<rect x="1075.500" y="427.500" width="9.500" height="10" fill="none" stroke="#111"/>
<path d="M1121.500 427.500l10 10M1131.500 427.500l-10 10" stroke="#111" stroke-width="1.100"/>
<text x="471" y="477" textLength="58" lengthAdjust="spacingAndGlyphs" style="fill:#000">Expression:</text>
<rect x="578.500" y="462.500" width="556" height="22" fill="#f0f0f0" stroke="#7a7a7a"/>
<text x="584" y="477" textLength="33" lengthAdjust="spacingAndGlyphs" style="fill:#000">HTML</text>
<text x="471" y="503" textLength="31" lengthAdjust="spacingAndGlyphs" style="fill:#000">Value:</text>
<rect x="471.500" y="510.500" width="646.500" height="516" fill="#efefef" stroke="#6e6e6e"/>
<g class="d">
<text x="476.500" y="526">{ "products":[ { "desc":"(Common: 3/4-in x 3/4-in x 26-in; Actual: 0.75-in x</text>
<text x="476.500" y="544">0.75-in x 26-in) Black Aluminum Deck Baluster", "url":"/pd/Deckorators-Common-</text>
<text x="476.500" y="562">3-4-in-x-3-4-in-x-26-in-Actual-0-75-in-x-0-75-in-x-26-in-Black-Aluminum-Deck-</text>
<text x="476.500" y="580">Baluster/3562380", "brand":"Deckorators", "itemNumber":"379936",</text>
<text x="476.500" y="598">"vendorNumber":"67197", "modelNumber":"138107", "imgName":"090489228033",</text>
<text x="476.500" y="616">"productId":"3562380", "rating":4.5556, "reviewCount":27 } ], "error":{  } }</text>
</g>
<path d="M477.500 513v17" stroke="#000"/>
<path d="M1123 522l3.500-3.500 3.500 3.500M1123 1017l3.500 3.500 3.500-3.500" fill="none" stroke="#c8c8c8" stroke-width="1.500"/>
<rect x="471.500" y="1041.500" width="12.500" height="12" fill="#efefef" stroke="#333"/>
<path d="M474 1047.500l3 3 5-7" fill="none" stroke="#333" stroke-width="1.200"/>
<text x="487.500" y="1051" textLength="27.500" lengthAdjust="spacingAndGlyphs" style="fill:#000">Wrap</text>
<rect x="923.500" y="1035.500" width="100" height="23" fill="#e1e1e1" stroke="#adadad"/>
<text x="959" y="1051" textLength="29" lengthAdjust="spacingAndGlyphs" style="fill:#000">Close</text>
<rect x="1033.500" y="1035.500" width="100" height="23" fill="#e1e1e1" stroke="#adadad"/>
<text x="1071" y="1051" textLength="25" lengthAdjust="spacingAndGlyphs" style="fill:#000">Help</text>
<path d="M1138 1073l10-10M1141 1073l7-7M1144 1073l4-4" stroke="#9a9a9a"/>
<path d="M695.500 785.500h6M695.500 800.500h6M698.500 785.500v15" stroke="#111" fill="none"/>
</svg>
</body></html>
